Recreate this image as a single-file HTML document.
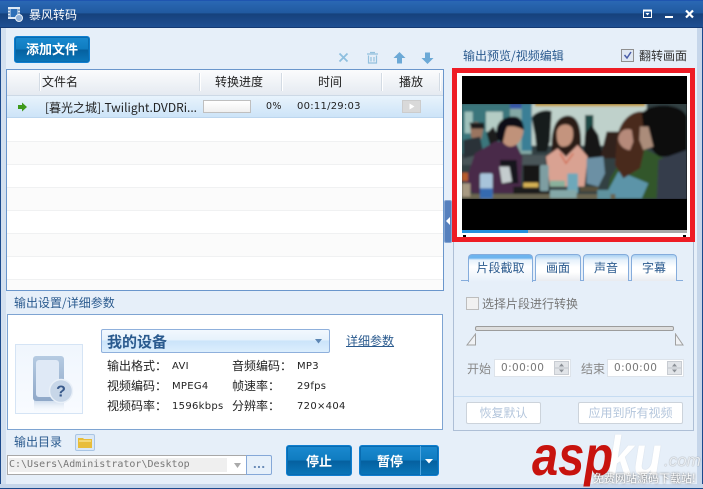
<!DOCTYPE html>
<html><head><meta charset="utf-8"><style>
*{box-sizing:border-box;margin:0;padding:0}
html,body{width:703px;height:489px;overflow:hidden;background:#e6eff9}
body{position:relative;font:12px "WenQuanYi Zen Hei","Noto Sans CJK SC",sans-serif;color:#222}
.a{position:absolute;white-space:nowrap}
.t{line-height:14px;font-size:12px}
.blue{color:#2a5a8e}
.btn{position:absolute;border:1px solid #0f7fd0;border-radius:3px;background:linear-gradient(#1b8ad0 0,#0f7cc0 48%,#05609f 52%,#0a77ba 100%);color:#fff;font-weight:bold;font-size:13px;text-align:center;box-shadow:inset 0 0 0 1px #0a6cb0}
.line{position:absolute;left:7px;width:436px;height:1px;background:#f0f1f2}
.alt{position:absolute;left:7px;width:436px;height:22px;background:#fbfbfb}
.sep{position:absolute;top:73px;width:2px;height:18px;background:linear-gradient(90deg,#d3dbe4 50%,#fff 50%)}
.lat{font-family:"DejaVu Sans",sans-serif;font-size:10px;line-height:14px;letter-spacing:.3px;color:#222}
.tab{position:absolute;top:254px;height:27px;background:linear-gradient(#a9d1f2 0,#e6f1fb 5px,#fff 12px,#fff 17px,#e6e9ee 27px);border:1px solid #85acdc;border-bottom:0;border-radius:4px 4px 0 0;text-align:center;color:#2a5a8e;font-size:12px;line-height:26px}
.spin{position:absolute;width:77px;height:18px;background:#fff;border:1px solid #dde3ea;color:#777;font:10.5px/16px "DejaVu Sans",sans-serif;padding-left:6px;letter-spacing:.4px}
.spin svg{position:absolute;right:1px;top:1px}
.gb{position:absolute;top:402px;height:22px;background:#fff;border:1px solid #ccd3db;border-radius:2px;color:#b4c6dc;text-align:center;font-size:12px;line-height:20px}
</style></head><body>

<!-- window frame -->
<div class="a" style="left:0;top:0;width:703px;height:28px;background:linear-gradient(#2a68b4 0,#215aa0 45%,#16417c 50%,#1e4f92 100%);border-top:1px solid #1f55b0;border-bottom:1px solid #143a74"></div>
<div class="a" style="left:0;top:28px;width:1px;height:461px;background:#1c4a8c"></div>
<div class="a" style="left:1px;top:28px;width:5px;height:461px;background:#d3e0ef"></div>
<div class="a" style="left:697px;top:28px;width:5px;height:461px;background:#c6d6ea"></div>
<div class="a" style="left:702px;top:28px;width:1px;height:461px;background:#1c4a8c"></div>
<div class="a" style="left:0;top:484px;width:703px;height:4px;background:#c6d6ea"></div>
<div class="a" style="left:0;top:488px;width:703px;height:1px;background:#1c4a8c"></div>

<!-- title -->
<svg class="a" style="left:7px;top:6px" width="16" height="16" viewBox="0 0 16 16"><rect x="1" y="1" width="12" height="12" fill="#dfe9f4"/><rect x="3.500" y="3" width="7" height="8" fill="#2f70b8"/><path d="M1 4h2M1 7h2M1 10h2M11 4h2M11 7h2M11 10h2" stroke="#2a5a96"/><circle cx="12" cy="12" r="3.500" fill="#8fb0d8" stroke="#e8f0f8"/></svg>
<div class="a" style="left:29px;top:7px;color:#fff;font-size:12px;line-height:15px">暴风转码</div>
<svg class="a" style="left:640px;top:8px" width="62" height="14" viewBox="0 0 62 14"><rect x="3.500" y="2.500" width="8" height="7" fill="none" stroke="#fff"/><path d="M3 2.500h9" stroke="#fff" stroke-width="2"/><path d="M5.500 5h4l-2 2.500z" fill="#fff"/><rect x="25" y="8" width="8" height="2" fill="#fff"/><path d="M46 2.500l7 7M53 2.500l-7 7" stroke="#fff" stroke-width="2.200"/></svg>

<!-- add file -->
<div class="btn" style="left:14px;top:36px;width:76px;height:27px;line-height:24px;font-size:13px">添加文件</div>

<!-- toolbar icons -->
<svg class="a" style="left:335px;top:50px" width="105" height="16" viewBox="0 0 105 16"><path d="M4.500 3.500l8 8M12.500 3.500l-8 8" stroke="#8ebfdf" stroke-width="1.800"/><path d="M32 4h11M35 2.500h5M33.500 5.500v7.500h8V5.500M36 7v4.500M39 7v4.500" fill="none" stroke="#94c1de" stroke-width="1.200"/><path d="M64.500 2l6 6h-3.500v5.500h-5V8H58.500z" fill="#6ca9d6"/><path d="M90 2.500h5V8h3.500l-6 6-6-6H90z" fill="#6ca9d6"/></svg>

<!-- list -->
<div class="a" style="left:6px;top:69px;width:438px;height:222px;background:#fff;border:1px solid #6a96cc"></div>
<div class="a" style="left:7px;top:70px;width:436px;height:26px;background:linear-gradient(#fbfcfd,#e5eaf1);border-bottom:1px solid #cdd9e6"></div>
<div class="sep" style="left:39px"></div><div class="sep" style="left:199px"></div><div class="sep" style="left:281px"></div><div class="sep" style="left:381px"></div><div class="sep" style="left:439px"></div>
<div class="a t" style="left:42px;top:75px">文件名</div>
<div class="a t" style="left:215px;top:75px">转换进度</div>
<div class="a t" style="left:318px;top:75px">时间</div>
<div class="a t" style="left:399px;top:75px">播放</div>
<div class="a" style="left:7px;top:96px;width:436px;height:22px;background:linear-gradient(#e8f3fc,#cde4f8);border-bottom:1px solid #bcd6ee"></div>
<svg class="a" style="left:17px;top:102px" width="11" height="10" viewBox="0 0 11 10"><path d="M1 3h4V.5L10 5 5 9.500V7H1z" fill="#3f9a1c"/></svg>
<div class="a" style="left:45px;top:100px;font-size:12px;line-height:15px;color:#222">[暮光之城].Twilight.DVDRi...</div>
<div class="a" style="left:203px;top:100px;width:48px;height:13px;background:linear-gradient(#fff,#f0f0f0);border:1px solid #bfbfbf"></div>
<div class="a lat" style="left:266px;top:100px;font-size:9.500px">0%</div>
<div class="a lat" style="left:297px;top:100px;letter-spacing:.25px">00:11/29:03</div>
<div class="a" style="left:402px;top:100px;width:19px;height:13px;background:#d9d9d9;border:1px solid #cccccc"></div>
<svg class="a" style="left:402px;top:100px" width="19" height="13"><path d="M7.500 3.500l5 3-5 3z" fill="#fff"/></svg>
<div class="alt" style="top:142px"></div><div class="alt" style="top:188px"></div><div class="alt" style="top:234px"></div><div class="alt" style="top:280px;height:10px"></div>
<div class="line" style="top:141px"></div><div class="line" style="top:164px"></div><div class="line" style="top:187px"></div><div class="line" style="top:210px"></div><div class="line" style="top:233px"></div><div class="line" style="top:256px"></div><div class="line" style="top:279px"></div>

<!-- splitter -->
<div class="a" style="left:444px;top:200px;width:8px;height:43px;background:#5680bd;border:1px solid #85a5d2;border-radius:2px"></div>
<svg class="a" style="left:445px;top:216px" width="6" height="10"><path d="M5 1v8L1 5z" fill="#fff"/></svg>

<!-- output settings -->
<div class="a t blue" style="left:14px;top:296px">输出设置/详细参数</div>
<div class="a" style="left:7px;top:314px;width:436px;height:116px;background:#fff;border:1px solid #7ea4d2"></div>
<div class="a" style="left:15px;top:344px;width:68px;height:70px;background:linear-gradient(#f0f6fd,#f8fbff);border:1px solid #d5e4f5"></div>
<svg class="a" style="left:15px;top:344px" width="68" height="70" viewBox="0 0 68 70"><defs><linearGradient id="g" x1="0" y1="0" x2="0" y2="1"><stop offset="0" stop-color="#b6cbe2"/><stop offset="1" stop-color="#8fa8c8"/></linearGradient><linearGradient id="f" x1="0" y1="0" x2="0" y2="1"><stop offset="0" stop-color="#a9c0dc"/><stop offset="1" stop-color="#f4f8fd" stop-opacity="0"/></linearGradient></defs><rect x="19" y="56" width="30" height="12" fill="url(#f)" opacity=".6"/><rect x="18" y="12" width="31" height="45" rx="3" fill="url(#g)"/><rect x="21" y="16" width="23" height="37" rx="3" fill="#dfe9f6"/><circle cx="46" cy="47" r="11.500" fill="#c7d6e8" stroke="#e9f0f8" stroke-width="1.500"/><text x="46" y="52.500" text-anchor="middle" font-family="Liberation Sans" font-weight="bold" font-size="16" fill="#38598a">?</text></svg>
<div class="a" style="left:101px;top:329px;width:229px;height:24px;background:linear-gradient(#f2f8fe 0,#e6f2fc 45%,#cbe4fa 50%,#dceefd 100%);border:1px solid #8fb0dc;border-radius:2px"></div>
<div class="a" style="left:107px;top:333px;font-size:15px;line-height:17px;font-weight:bold;color:#2a5a8e">我的设备</div>
<svg class="a" style="left:314px;top:338px" width="10" height="7"><path d="M1 1h7L4.500 5.500z" fill="#5c86b4"/></svg>
<div class="a blue" style="left:346px;top:334px;font-size:12px;line-height:14px;text-decoration:underline">详细参数</div>

<div class="a t" style="left:107px;top:359px">输出格式：</div>
<div class="a t" style="left:107px;top:379px">视频编码：</div>
<div class="a t" style="left:107px;top:399px">视频码率：</div>
<div class="a t" style="left:232px;top:359px">音频编码：</div>
<div class="a t" style="left:232px;top:379px">帧速率：</div>
<div class="a t" style="left:232px;top:399px">分辨率：</div>
<div class="a lat" style="left:172px;top:360px">AVI</div>
<div class="a lat" style="left:172px;top:380px">MPEG4</div>
<div class="a lat" style="left:172px;top:400px">1596kbps</div>
<div class="a lat" style="left:297px;top:360px">MP3</div>
<div class="a lat" style="left:297px;top:380px">29fps</div>
<div class="a lat" style="left:297px;top:400px">720×404</div>

<!-- output dir -->
<div class="a t blue" style="left:14px;top:435px">输出目录</div>
<div class="a" style="left:75px;top:434px;width:20px;height:17px;background:#dbe8f6;border:1px solid #a9c5e4;border-radius:2px"></div>
<svg class="a" style="left:78px;top:437px" width="14" height="11"><path d="M0 1h5l1 1h8v9H0z" fill="#e8bd3a"/><rect x="1" y="3.500" width="12" height="1" fill="#fff3b0"/></svg>
<div class="a" style="left:7px;top:455px;width:240px;height:20px;background:#fff;border:1px solid #a8a8a8;border-right:0"></div>
<div class="a" style="left:9px;top:458px;width:218px;height:14px;background:#efefef;color:#777;font:10px/13px 'DejaVu Sans Mono',monospace">C:\Users\Administrator\Desktop</div>
<svg class="a" style="left:233px;top:462px" width="10" height="7"><path d="M1 1h7L4.500 6z" fill="#aaa"/></svg>
<div class="a" style="left:246px;top:455px;width:26px;height:20px;background:#e6f0fa;border:1px solid #85a8d8;border-radius:0 2px 2px 0;color:#6a8cb8;text-align:center;font:bold 11px/18px 'DejaVu Sans',sans-serif">...</div>
<div class="btn" style="left:286px;top:445px;width:66px;height:31px;line-height:29px">停止</div>
<div class="btn" style="left:359px;top:445px;width:80px;height:31px;line-height:29px;padding-right:18px">暂停</div>
<div class="a" style="left:420px;top:446px;width:1px;height:29px;background:#4ea6e0"></div>
<svg class="a" style="left:424px;top:458px" width="11" height="7"><path d="M1 1h8L5 5.500z" fill="#fff"/></svg>

<!-- right panel -->
<div class="a t blue" style="left:463px;top:49px">输出预览/视频编辑</div>
<div class="a" style="left:621px;top:49px;width:13px;height:13px;background:#dfe7f2;border:1px solid #8f8f8f"></div>
<svg class="a" style="left:622px;top:50px" width="11" height="11"><path d="M2.500 5l2.500 3 4-6" fill="none" stroke="#4a5da8" stroke-width="1.500"/></svg>
<div class="a t" style="left:639px;top:49px;color:#333">翻转画面</div>

<div class="a" style="left:453px;top:68px;width:241px;height:363px;border:1px solid #aebfd6;border-top:0"></div>
<div class="a" style="left:452px;top:68px;width:243px;height:174px;background:#fff;border:5px solid #ee1c25"></div>
<div class="a" style="left:462px;top:76px;width:225px;height:154px;background:#000"></div>
<svg class="a" style="left:460px;top:90px" width="230" height="120" viewBox="0 0 690 360">
<defs><filter id="b"><feGaussianBlur stdDeviation="3"/></filter><clipPath id="c"><rect x="6" y="42" width="674" height="285"/></clipPath></defs>
<g clip-path="url(#c)"><g filter="url(#b)">
<rect x="0" y="30" width="690" height="300" fill="#333f42"/>
<rect x="6" y="42" width="145" height="150" fill="#3a767c"/>
<rect x="14" y="65" width="24" height="65" fill="#a0c2bc"/><rect x="78" y="65" width="50" height="60" fill="#b4ccc4"/>
<rect x="150" y="42" width="65" height="150" fill="#84a8a4"/><rect x="185" y="42" width="30" height="140" fill="#3a7f96"/>
<rect x="215" y="42" width="345" height="125" fill="#bfd1cb"/>
<rect x="150" y="42" width="35" height="14" fill="#3557a8"/><rect x="225" y="42" width="330" height="7" fill="#c9a13c"/>
<path d="M215 85c5-20 50-30 60-20l-5 90-10 30h-30l-5-50z" fill="#191b1d"/>
<path d="M375 75h25v60h-25z" fill="#1c4a44"/><path d="M375 130l20-25 20 30 15 70h-60z" fill="#141718"/>
<path d="M440 125h40l10 80h-70z" fill="#33231d"/>
<rect x="6" y="195" width="250" height="30" fill="#4a5458"/>
<path d="M30 105a22 22 0 0 1 40 10l-6 32-30-4z" fill="#9a7460"/><path d="M28 98h44l2 18H34z" fill="#1a1c1e"/>
<path d="M10 150l50-10 10 50-60 15z" fill="#2b3338"/>
<path d="M80 130l20-20 20 40-30 15z" fill="#1c1a1c"/>
<path d="M15 280l30-90 60-35 60 0 22 45-5 110H40z" fill="#4a2a48"/>
<path d="M120 210h50l5 70h-50z" fill="#17171a"/>
<path d="M118 230l30 0 8 45-30 5z" fill="#c4ccce"/>
<path d="M120 115c10-15 50-25 70 0 2 25-15 55-40 55-25-5-30-30-30-55z" fill="#c0927a"/>
<path d="M110 135c-6-40 25-58 55-55 20 2 27 24 27 40-15-8-35-14-50-10-8 14-8 32-14 48-10-4-16-10-18-23z" fill="#111113"/>
<path d="M275 185c-3-50 5-105 48-108 38 0 45 55 38 125-30 10-66 8-86-17z" fill="#2c1a18"/>
<path d="M290 130c0-30 40-35 48-12 5 30-5 50-25 52s-23-20-23-40z" fill="#c4947e"/>
<path d="M258 200l35-25 25 25 35-35 30 35-10 90H270z" fill="#d9a292"/>
<path d="M300 190l18 30 22-30" fill="none" stroke="#d06a50" stroke-width="4"/>
<path d="M190 225h60v60h-60z" fill="#121516"/>
<path d="M380 205l50-5 5 50-20 40-35-10z" fill="#6c90a4"/>
<path d="M440 325l10-60 40-65 50-30 70 35-10 120H450z" fill="#33562a"/>
<path d="M445 300l30-55 30 10 60 25-20 45h-90z" fill="#5c94a8"/>
<path d="M470 150c5-50 40-90 80-85l15 60-25 110-50 30-25-40z" fill="#4a2a1c"/>
<path d="M475 145c5-30 30-30 40-25l5 35-10 25c-15 0-35-15-35-35z" fill="#b68a7a"/>
<path d="M545 70c30-35 120-30 135 10v120h-80c-25-10-40-50-50-90z" fill="#0b0b0d"/>
<path d="M540 110l25 0 15 60-30 10-12-30z" fill="#ab8c7a"/>
<path d="M595 210l85-30v150H590z" fill="#363d4c"/>
<rect x="6" y="312" width="460" height="15" fill="#6a654f"/>
<rect x="160" y="290" width="110" height="22" fill="#1a1c1c"/>
<rect x="190" y="278" width="45" height="14" fill="#d7b255"/><rect x="270" y="272" width="45" height="18" fill="#8ab19c"/>
<rect x="60" y="250" width="38" height="76" rx="6" fill="#a8c4da"/><rect x="60" y="295" width="38" height="30" fill="#346ab0"/>
<rect x="240" y="225" width="26" height="78" rx="5" fill="#7e9ea2"/>
<rect x="322" y="250" width="32" height="60" rx="4" fill="#6ea8ba"/>
<rect x="270" y="300" width="80" height="24" fill="#84a8a8"/>
<rect x="360" y="290" width="55" height="15" fill="#57503a"/>
<rect x="412" y="300" width="40" height="27" fill="#5f929e"/>
<rect x="6" y="280" width="25" height="40" fill="#a89a82"/>
<rect x="6" y="248" width="18" height="25" fill="#b85c2c"/>
</g></g>
</svg>
<div class="a" style="left:462px;top:230px;width:225px;height:3px;background:#a8a8a8"></div>
<div class="a" style="left:462px;top:230px;width:66px;height:3px;background:#2590dc"></div>
<div class="a" style="left:463px;top:235px;width:3px;height:2px;background:#000"></div>
<div class="a" style="left:683px;top:235px;width:3px;height:2px;background:#000"></div>

<!-- tabs -->
<div class="a" style="left:461px;top:280px;width:222px;height:1px;background:#85acdc"></div>
<div class="tab" style="left:468px;width:65px;height:28px;background:linear-gradient(#6db4ee 0,#6db4ee 3px,#e6f1fb 5px,#fff 12px,#e6eff9 27px)">片段截取</div>
<div class="tab" style="left:535px;width:46px">画面</div>
<div class="tab" style="left:583px;width:46px">声音</div>
<div class="tab" style="left:631px;width:46px">字幕</div>

<div class="a" style="left:466px;top:297px;width:13px;height:13px;background:#f1f1f1;border:1px solid #bdbdbd"></div>
<div class="a t" style="left:482px;top:297px;color:#777">选择片段进行转换</div>
<div class="a" style="left:475px;top:326px;width:199px;height:5px;background:#dedede;border:1px solid #9c9c9c;border-radius:2px"></div>
<svg class="a" style="left:466px;top:333px" width="218" height="13"><path d="M9.500 1v11H1zM209.500 1v11H217z" fill="#f0f2f5" stroke="#a0a0a0"/></svg>

<div class="a t" style="left:467px;top:362px;color:#888">开始</div>
<div class="spin" style="left:494px;top:359px">0:00:00<svg width="15" height="14"><rect x=".5" y=".5" width="14" height="13" fill="#e1e4e8" stroke="#c8ccd2"/><path d="M1 7h13" stroke="#c0c4ca"/><path d="M7.500 2.500l2.500 3h-5zM7.500 11.500l2.500-3h-5z" fill="#8a8f96"/></svg></div>
<div class="a t" style="left:581px;top:362px;color:#888">结束</div>
<div class="spin" style="left:607px;top:359px">0:00:00<svg width="15" height="14"><rect x=".5" y=".5" width="14" height="13" fill="#e1e4e8" stroke="#c8ccd2"/><path d="M1 7h13" stroke="#c0c4ca"/><path d="M7.500 2.500l2.500 3h-5zM7.500 11.500l2.500-3h-5z" fill="#8a8f96"/></svg></div>
<div class="a" style="left:454px;top:396px;width:239px;height:1px;background:#c6dcf2"></div>
<div class="gb" style="left:466px;width:75px">恢复默认</div>
<div class="gb" style="left:578px;width:105px">应用到所有视频</div>

<!-- watermark -->
<div class="a" style="left:532px;top:428px;font:italic bold 56px/56px 'Liberation Sans',sans-serif;color:#c8130e;transform:scaleX(.84);transform-origin:0 0">asp</div>
<div class="a" style="left:608px;top:428px;font:italic bold 56px/56px 'Liberation Sans',sans-serif;color:#fff;text-shadow:0 0 1px #c4ccd6;transform:scaleX(.82);transform-origin:0 0">ku</div>
<div class="a" style="left:664px;top:451px;font:italic 17px/20px 'Liberation Sans',sans-serif;color:#e8edf2;text-shadow:0 0 1px #777">.com</div>
<div class="a" style="left:593px;top:472px;font-size:11px;line-height:13px;color:#fff;text-shadow:0 0 2px #444">免费网站源码下载站!</div>
</body></html>
